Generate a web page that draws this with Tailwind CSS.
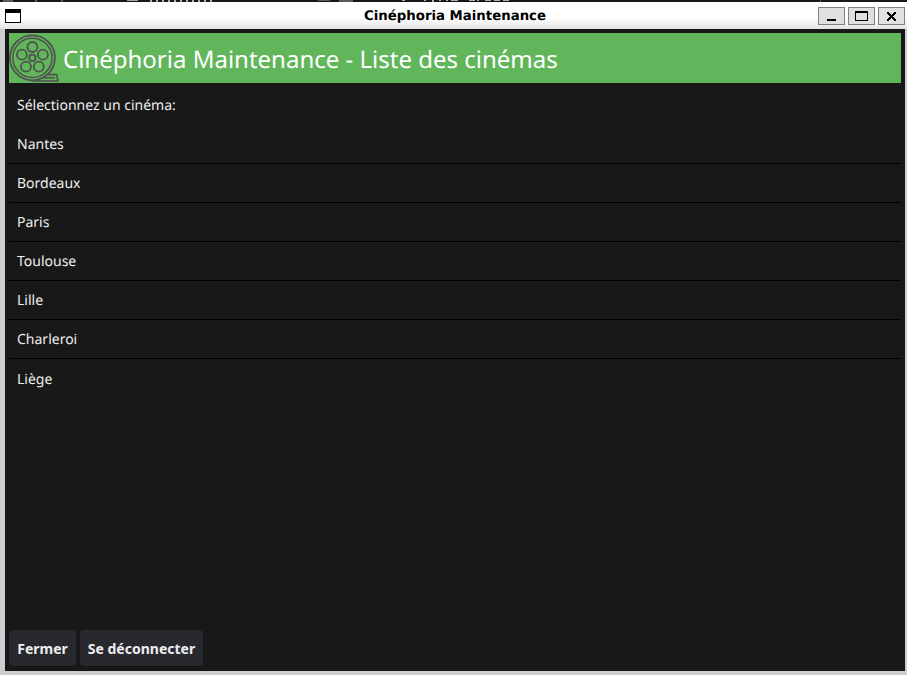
<!DOCTYPE html>
<html lang="fr">
<head>
<meta charset="utf-8">
<title>Cinéphoria Maintenance</title>
<script src="https://cdn.jsdelivr.net/npm/@tailwindcss/browser@4"></script>
</head>
<body class="flex h-[675px] w-[907px] flex-col overflow-hidden bg-[#cdcdcd] font-['Noto_Sans',sans-serif]">
<div class="relative h-[2px] shrink-0 bg-[#1a1718]">
  <svg class="absolute inset-0" width="907" height="2" shape-rendering="crispEdges">
    <path fill="#5c5c5c" d="M3 0h10v2h-10zM35 0h2v2h-2zM61 0h2v2h-2zM318 0h12v1h-12zM339 0h14v2h-14zM820 0h1v2h-1z"/>
    <path fill="#a3a3a3" d="M127 0h11v1h-11z"/>
    <path stroke="#b0b0b0" stroke-width="2" stroke-dasharray="2 4" d="M150 1H214"/>
    <path fill="#b0b0b0" d="M402 0h3v1h-3zM424 0h2v1h-2zM432 0h2v2h-2zM439 0h2v1h-2zM446 0h2v1h-2zM451 0h7v1h-7zM469 0h6v1h-6zM477 0h2v1h-2zM485 0h6v1h-6zM494 0h6v1h-6zM503 0h6v1h-6z"/>
  </svg>
</div>
<header class="grid h-[27px] shrink-0 grid-cols-[1fr_auto_1fr] items-center bg-linear-to-b from-white from-60% to-[#e2e2e2] pr-[2px] pl-[5px]">
  <svg width="16" height="14" shape-rendering="crispEdges"><path fill="#000" d="M0 0h16v14H0z"/><path fill="#fff" d="M1 4h14v9H1z"/></svg>
  <h1 class="pt-[2px] font-['DejaVu_Sans',sans-serif] text-[13.3px] leading-4 font-bold text-black [text-rendering:geometricPrecision]">Cinéphoria Maintenance</h1>
  <div class="flex justify-end gap-[3px]">
    <button aria-label="Réduire" class="h-[18px] w-[27px] border border-[#808080] bg-[#e0e0e0]"><svg width="25" height="16" shape-rendering="crispEdges"><path d="M8 11h9v2H8z"/></svg></button>
    <button aria-label="Agrandir" class="h-[18px] w-[27px] border border-[#808080] bg-[#e0e0e0]"><svg width="25" height="16" shape-rendering="crispEdges"><path fill-rule="evenodd" d="M6 3h13v10H6zM7 5v7h11V5z"/></svg></button>
    <button aria-label="Quitter" class="h-[18px] w-[27px] border border-[#808080] bg-[#e0e0e0]"><svg width="25" height="16" shape-rendering="crispEdges"><path d="M8 4h2v1h-2zM15 4h2v1h-2zM8 5h3v1h-3zM14 5h3v1h-3zM9 6h3v1h-3zM13 6h3v1h-3zM10 7h5v1h-5zM11 8h3v1h-3zM10 9h5v1h-5zM9 10h3v1h-3zM13 10h3v1h-3zM8 11h3v1h-3zM14 11h3v1h-3zM8 12h2v1h-2zM15 12h2v1h-2z"/></svg></button>
  </div>
</header>
<main class="mr-[2px] mb-[4px] ml-[5px] flex flex-1 flex-col bg-[#181818] p-[4px] text-sm text-[#eeeeee] [text-rendering:geometricPrecision]">
  <div class="flex h-[50px] shrink-0 items-center gap-[4px] bg-[#61b65b]">
    <svg width="50" height="50" fill="none" stroke="#505050" stroke-width="1.8">
      <circle cx="23.4" cy="24.8" r="22.5"/><circle cx="23.4" cy="24.8" r="19.6" stroke-width="1.5"/>
      <circle cx="23.4" cy="14" r="5"/><circle cx="12.9" cy="21.7" r="5"/><circle cx="33.9" cy="21.7" r="5"/><circle cx="17" cy="33.7" r="5"/><circle cx="29.8" cy="33.7" r="5"/><circle cx="23.4" cy="24.9" r="3.2"/>
      <path stroke-width="1.6" d="M23.5 48H49L47.6 41.6H39M33 44.8H46"/>
    </svg>
    <h2 class="pt-[3px] text-2xl leading-8 text-white">Cinéphoria Maintenance - Liste des cinémas</h2>
  </div>
  <p class="flex h-[42px] shrink-0 items-center px-2 pt-[4px]">Sélectionnez un cinéma:</p>
  <ul class="flex-1 divide-y divide-black *:flex *:h-[39px] *:items-center *:px-2 *:pt-[2px]">
    <li>Nantes</li><li>Bordeaux</li><li>Paris</li><li>Toulouse</li><li>Lille</li><li>Charleroi</li><li>Liège</li>
  </ul>
  <footer class="mb-[1px] flex gap-[4px] font-bold">
    <button class="h-9 w-[67px] rounded-[4px] bg-[#28292e] pt-[2px]">Fermer</button>
    <button class="h-9 w-[123px] rounded-[4px] bg-[#28292e] pt-[2px]">Se déconnecter</button>
  </footer>
</main>
</body>
</html>
